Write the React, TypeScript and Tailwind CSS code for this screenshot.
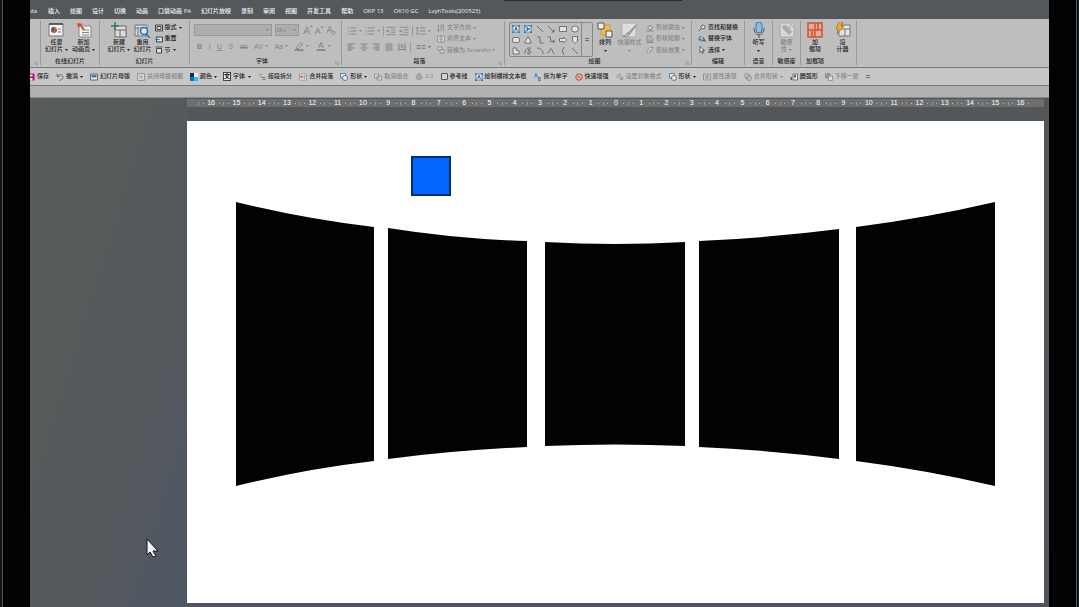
import React from "react";
import clsx from "clsx";

const menus = [
  "插入",
  "绘图",
  "设计",
  "切换",
  "动画",
  "口袋动画 PA",
  "幻灯片放映",
  "录制",
  "审阅",
  "视图",
  "开发工具",
  "帮助",
  "OKP 13",
  "OK10 GC",
  "LvyhTools(200523)",
];

const icons: Record<string, React.ReactNode> = {
  slidePie: (
    <>
      <path d="M1 2h14v12H1z" fill="#f2f2f2" stroke="#777" />
      <path d="M1 2h14" stroke="#444" strokeWidth="1.5" />
      <circle cx="6" cy="8" r="3" fill="#d2502d" />
      <path d="M6 8V5a3 3 0 0 0-2 5z" fill="#2c62a0" />
      <path d="M10 7h3M10 10h3" stroke="#777" />
    </>
  ),
  slideStar: (
    <>
      <path d="M3 4h12v11H3z" fill="#f4f4f4" stroke="#888" />
      <path d="M6 8h7M6 10.5h7M6 13h7" stroke="#888" />
      <path d="M1 1l6 1-2 1 4 4-2 1-3-4-2 2z" fill="#e2462c" />
    </>
  ),
  newSlide: (
    <>
      <path d="M4 4h11v11H4zM4 8h11M9 8v7" fill="#ddd" stroke="#666" />
      <path d="M4 0v8M0 4h8" stroke="#2f7d4f" strokeWidth="1.5" />
    </>
  ),
  reuse: (
    <>
      <path d="M1 3h12v11H1zM1 6h12M4 6v8" fill="#d8d8d8" stroke="#777" />
      <circle cx="10" cy="9" r="3.5" fill="#dce9f3" stroke="#2274b5" strokeWidth="1.5" />
      <path d="M12 12l4 4" stroke="#2274b5" strokeWidth="1.5" />
    </>
  ),
  layout: <path d="M1 2h14v12H1zM4 5h8v6H4z" fill="#ddd" stroke="#444" strokeWidth="2" />,
  reset: (
    <>
      <path d="M3 4h12v10H3z" fill="#ddd" stroke="#444" strokeWidth="2" />
      <path d="M9 9H2M5 5L1 9l4 4" fill="none" stroke="#2274b5" strokeWidth="2" />
    </>
  ),
  section: (
    <>
      <path d="M3 5h10v9H3z" fill="#ddd" stroke="#444" strokeWidth="2" />
      <path d="M1 2h14" stroke="#2f7d4f" strokeWidth="2" />
    </>
  ),
  growFont: <path d="M1 15L6 3l5 12M3 11h6M11 4l2-3 2 3" fill="none" stroke="currentColor" strokeWidth="1.5" />,
  shrinkFont: <path d="M2 14L6 5l4 9M4 11h5M11 2l2 3 2-3" fill="none" stroke="currentColor" strokeWidth="1.5" />,
  clearFont: <path d="M1 13L6 2l4 9M3 9h5M9 12l3-3 3 3-3 3z" fill="none" stroke="currentColor" strokeWidth="1.5" />,
  marker: (
    <>
      <path d="M4 10l7-8 3 3-7 7H4z" fill="none" stroke="currentColor" strokeWidth="1.5" />
      <path d="M1 13h14v3H1z" fill="currentColor" />
    </>
  ),
  fontColor: (
    <>
      <path d="M4 11L8 2l4 9M5 8h6" fill="none" stroke="currentColor" strokeWidth="1.5" />
      <path d="M1 13h14v3H1z" fill="currentColor" />
    </>
  ),
  list: <path d="M1 3h2M5 3h10M1 8h2M5 8h10M1 13h2M5 13h10" stroke="currentColor" strokeWidth="1.5" />,
  indent: <path d="M1 2h14M8 6h7M8 10h7M1 14h14M6 8H1M3 6L1 8l2 2" fill="none" stroke="currentColor" strokeWidth="1.5" />,
  spacing: <path d="M6 3h9M6 8h9M6 13h9M2 2v12M0 4l2-2 2 2M0 12l2 2 2-2" fill="none" stroke="currentColor" strokeWidth="1.5" />,
  alignLeft: <path d="M1 2h14M1 6h9M1 10h14M1 14h9" stroke="currentColor" strokeWidth="1.5" />,
  alignCenter: <path d="M1 2h14M4 6h8M1 10h14M4 14h8" stroke="currentColor" strokeWidth="1.5" />,
  alignRight: <path d="M1 2h14M6 6h9M1 10h14M6 14h9" stroke="currentColor" strokeWidth="1.5" />,
  justify: <path d="M1 2h14M1 6h14M1 10h14M1 14h14" stroke="currentColor" strokeWidth="1.5" />,
  distribute: <path d="M2 1v14M14 1v14M5 4h6M5 8h6M2 13h12" stroke="currentColor" strokeWidth="1.5" />,
  columns: <path d="M1 6h6M9 6h6M1 10h6M9 10h6" stroke="currentColor" strokeWidth="1.5" />,
  textDir: <path d="M3 1v14M1 12l2 3 2-3M8 15V2h5M13 2v13M8 8h5" fill="none" stroke="currentColor" strokeWidth="1.5" />,
  alignText: <path d="M1 2h14v12H1zM8 0v16M4 8h8" fill="#d2d2d2" stroke="currentColor" strokeWidth="1.5" />,
  smartArt: <path d="M1 2h9v6H1zM6 7h8v7H6z" fill="#d2d2d2" stroke="currentColor" strokeWidth="1.5" />,
  textBoxBlue: (
    <>
      <path d="M2 2h12v12H2z" fill="#e8f1f8" stroke="#2171b4" strokeWidth="1.5" />
      <path d="M5 12l3-8 3 8M6 9h4" fill="none" stroke="#1d4f80" strokeWidth="1.5" />
      <path d="M0 0h3v3H0zM13 0h3v3h-3zM0 13h3v3H0zM13 13h3v3h-3z" fill="#2171b4" />
    </>
  ),
  textBoxBlueV: (
    <>
      <path d="M2 2h12v12H2z" fill="#e8f1f8" stroke="#2171b4" strokeWidth="1.5" />
      <path d="M4 5l8 3-8 3M7 5v6" fill="none" stroke="#1d4f80" strokeWidth="1.5" />
      <path d="M0 0h3v3H0zM13 0h3v3h-3zM0 13h3v3H0zM13 13h3v3h-3z" fill="#2171b4" />
    </>
  ),
  line: <path d="M2 2l12 12" stroke="#555" strokeWidth="1.5" />,
  arrow: <path d="M2 2l12 12M14 9v5H9" fill="none" stroke="#555" strokeWidth="1.5" />,
  rect: <path d="M1 3h14v10H1z" fill="#e2e2e2" stroke="#555" strokeWidth="1.5" />,
  oval: <ellipse cx="8" cy="8" rx="7" ry="6" fill="#e2e2e2" stroke="#555" strokeWidth="1.5" />,
  roundRect: <rect x="1" y="3" width="14" height="10" rx="3" fill="#e2e2e2" stroke="#555" strokeWidth="1.5" />,
  triangle: <path d="M8 1l7 13H1z" fill="#e2e2e2" stroke="#555" strokeWidth="1.5" />,
  elbow: <path d="M2 2h6v12h7" fill="none" stroke="#555" strokeWidth="1.5" />,
  elbowArrow: <path d="M1 2h6v9h8M12 8l3 3-3 3" fill="none" stroke="#555" strokeWidth="1.5" />,
  blockArrow: <path d="M1 5h8V2l6 6-6 6v-3H1z" fill="#e2e2e2" stroke="#555" strokeWidth="1.5" />,
  pentagon: <path d="M3 1h10v9l-5 5-5-5z" fill="#e2e2e2" stroke="#555" strokeWidth="1.5" />,
  freeform: <path d="M2 2h7l-1 4 6 2v6H2z" fill="#e2e2e2" stroke="#555" strokeWidth="1.5" />,
  scribble: <path d="M2 13C2 3 8 1 13 2L8 7c7-3 6 8 1 7-4-1-1-5 2-3" fill="none" stroke="#555" strokeWidth="1.5" />,
  arc: <path d="M2 2c8 0 12 5 12 12" fill="none" stroke="#555" strokeWidth="1.5" />,
  curve: <path d="M1 12c5-1 4-9 7-9s2 10 7 10" fill="none" stroke="#555" strokeWidth="1.5" />,
  brace: <path d="M11 1c-5 0-2 7-5 7 3 0 0 7 5 7" fill="none" stroke="#555" strokeWidth="1.5" />,
  arrange: (
    <>
      <path d="M4 3h9v10H4z" fill="#f3bd4b" stroke="#d69a2b" />
      <path d="M1 1h6v6H1zM9 9h6v6H9z" fill="#eee" stroke="#555" />
    </>
  ),
  quickStyle: (
    <>
      <path d="M1 1h14v14H1z" fill="#dedede" stroke="#aaa" />
      <path d="M15 3l-8 8 2 1zM7 11c-3 0-2 3-5 3 3 1 6 1 6-2" fill="#bbb" stroke="#888" />
    </>
  ),
  fill: <path d="M3 8l5-6 5 6-5 4zM1 14h14" fill="#d5d5d5" stroke="currentColor" strokeWidth="2" />,
  outline: <path d="M13 7v5H2V2h7M6 9l7-8M1 15h14" fill="none" stroke="currentColor" strokeWidth="2" />,
  effect: <path d="M2 9l6-6h6l-3 6-4 5H4zM5 9h6" fill="#d5d5d5" stroke="currentColor" strokeWidth="1.5" />,
  search: <path d="M14 6a4 4 0 1 1-8 0 4 4 0 0 1 8 0zM7 9l-6 6" fill="#ddd" stroke="#444" strokeWidth="1.5" />,
  replaceFont: (
    <>
      <path d="M8 14l3-9 4 9M9 11h5" fill="none" stroke="#444" strokeWidth="1.5" />
      <path d="M7 3C2 3 1 7 4 10M1 9l4 2V7" fill="none" stroke="#2171b4" strokeWidth="2" />
    </>
  ),
  pointer: <path d="M4 1v12l3-3 2 5 2-1-2-5h4z" fill="#eee" stroke="#444" strokeWidth="1.5" />,
  mic: (
    <>
      <rect x="5" y="0" width="6" height="11" rx="3" fill="#8dbde2" stroke="#2a76b5" />
      <path d="M3 6c0 9 10 9 10 0M8 13v3" fill="none" stroke="#555" />
    </>
  ),
  sensitivity: (
    <>
      <path d="M1 1h14v14H1z" fill="#d8d8d8" stroke="#aaa" />
      <path d="M3 4l4-1 6 7-3 3-6-6z" fill="#aaa" />
      <path d="M11 2l3 3M9 4l3 3" stroke="#999" />
    </>
  ),
  addins: (
    <>
      <path d="M1 1h14v14H1z" fill="#dcaea0" stroke="#d4512e" strokeWidth="1.5" />
      <path d="M8 1v14M1 8h14M5 8v7M11 1v7" stroke="#d4512e" strokeWidth="1.5" />
    </>
  ),
  designer: (
    <>
      <path d="M4 3h11v11H4zM4 7h11M10 7v7" fill="#e2e2e2" stroke="#777" />
      <path d="M4 0h4L6 4h3l-7 8 1-5H1z" fill="#f2a92d" stroke="#9c6410" strokeWidth=".7" />
    </>
  ),
  save: (
    <>
      <path d="M0 1h15v14H0z" fill="#b5127b" />
      <path d="M2 3h9v4H2zM3 10h8v5H3z" fill="#f0dce8" />
    </>
  ),
  undo: <path d="M2 1v6h6M2 7c5-6 12-4 12 1 0 4-3 6-7 7" fill="none" stroke="#555" strokeWidth="1.5" />,
  master: (
    <>
      <path d="M1 2h14v12H1z" fill="#eee" stroke="#444" strokeWidth="1.5" />
      <path d="M3 4h10v5H3z" fill="#2b7cc0" />
    </>
  ),
  closeMaster: <path d="M1 1h14v14H1zM5 5l6 6M11 5l-6 6" fill="#d5d5d5" stroke="currentColor" strokeWidth="1.5" />,
  colors: (
    <>
      <path d="M0 0h8v8H0z" fill="#222b3b" />
      <path d="M8 0h8v8H8z" fill="#e6eff5" />
      <path d="M0 8h8v8H0z" fill="#0d65d8" />
      <path d="M8 8h8v8H8z" fill="#25c3f3" />
    </>
  ),
  split: (
    <>
      <path d="M1 3h9M1 6h6" stroke="#dda137" strokeWidth="2" />
      <path d="M6 9h9M9 13h6" stroke="#4384b7" strokeWidth="2" />
    </>
  ),
  merge: (
    <>
      <path d="M1 2h14v12H1z" fill="#eee" stroke="#666" />
      <path d="M3 5h4v5H3z" fill="#d2502d" />
      <path d="M9 6h4M9 10h4" stroke="#2171b4" strokeWidth="2" />
    </>
  ),
  shapes: (
    <>
      <path d="M1 1h10v9H1z" fill="#dce7ef" stroke="#2171b4" strokeWidth="1.5" />
      <circle cx="10" cy="10" r="5" fill="#eee" stroke="#555" strokeWidth="1.5" />
    </>
  ),
  group: <path d="M1 2h9v8H1zM6 6h9v8H6z" fill="#d6d6d6" stroke="currentColor" strokeWidth="1.5" />,
  ratio: <path d="M8 2a6 6 0 1 0 .1 0zM5 1h6M5 8h6" fill="#aaa" stroke="currentColor" />,
  splitChar: <path d="M1 9l3-8 3 8M2 6h4M9 15V9h4v3H9m0 3h5" fill="none" stroke="#2774ae" strokeWidth="1.5" />,
  quickBoost: (
    <>
      <circle cx="8" cy="8" r="6.5" fill="#e6c0b5" stroke="#bf4a33" strokeWidth="2" />
      <path d="M4 5l8 6M5 10l5-5" stroke="#bf4a33" strokeWidth="1.5" />
    </>
  ),
  format: <path d="M1 7l6-6 3 3-6 6zM8 10h7M8 13h4M9 7l5 4-5 4" fill="none" stroke="currentColor" strokeWidth="1.5" />,
  props: <path d="M6 2H1v12h5M10 2h5v12h-5M8 1v14M4 8h8" fill="none" stroke="currentColor" strokeWidth="1.5" />,
  union: <path d="M11 6a5 5 0 1 1-10 0 5 5 0 0 1 10 0zM15 10a5 5 0 1 1-10 0 5 5 0 0 1 10 0z" fill="none" stroke="currentColor" strokeWidth="1.5" />,
  arcShape: (
    <>
      <path d="M6 2h9v12H6z" fill="#eee" stroke="#555" strokeWidth="1.5" />
      <path d="M1 8h3v6H1z" fill="#c23a2a" />
      <path d="M8 4h4v5H8z" fill="#2171b4" />
    </>
  ),
  sendBack: (
    <>
      <path d="M1 1h9v9H1z" fill="#999" stroke="currentColor" strokeWidth="1.5" />
      <path d="M7 6h8v9H7z" fill="#ddd" stroke="currentColor" strokeWidth="1.5" />
    </>
  ),
};

const sizes = {
  sm: "size-2",
  md: "size-[10px]",
  lg: "size-4",
};

const Icon = ({ name, size = "sm" }: { name: string; size?: keyof typeof sizes }) => (
  <svg viewBox="0 0 16 16" className={clsx("shrink-0", sizes[size])} aria-hidden="true">
    {icons[name]}
  </svg>
);

const Caret = () => (
  <svg viewBox="0 0 6 4" className="h-[2px] w-[3px] shrink-0" aria-hidden="true">
    <path d="M0 0h6L3 4z" fill="currentColor" />
  </svg>
);

type ToolProps = { icon: string; label: string; caret?: boolean; muted?: boolean };

const Tool = ({ icon, label, caret, muted }: ToolProps) => (
  <button className={clsx("flex shrink-0 items-center gap-[2px]", muted && "text-[#858585]")}>
    <Icon name={icon} />
    {label}
    {caret && <Caret />}
  </button>
);

const BigTool = ({
  icon,
  lines,
  caret,
  muted,
}: {
  icon: string;
  lines: string[];
  caret?: boolean;
  muted?: boolean;
}) => (
  <button className={clsx("flex shrink-0 flex-col items-center", muted && "text-[#858585]")}>
    <Icon name={icon} size="lg" />
    <span className="mt-px">{lines[0]}</span>
    <span className="flex h-[7px] items-center gap-[2px]">
      {lines[1]}
      {caret && <Caret />}
    </span>
  </button>
);

const IconTool = ({ icon, label, caret }: { icon: string; label: string; caret?: boolean }) => (
  <button aria-label={label} className="flex items-center gap-[2px]">
    <Icon name={icon} size="md" />
    {caret && <Caret />}
  </button>
);

const Group = ({
  label,
  width,
  launcher,
  last,
  children,
}: {
  label?: string;
  width: string;
  launcher?: boolean;
  last?: boolean;
  children?: React.ReactNode;
}) => (
  <section className={clsx("relative my-[2px] flex shrink-0 flex-col", width, !last && "border-r border-[#999]")}>
    <div className="flex h-9 items-start justify-center pt-px">{children}</div>
    <h2 className={clsx("mt-px text-center", launcher && "pr-[7px]")}>{label}</h2>
    {launcher && (
      <button aria-label="更多选项" className="absolute right-[2px] bottom-0 text-[#777]">
        <svg viewBox="0 0 8 8" className="size-1">
          <path d="M0 7V0h7M3 3l4 4M7 4v3H4" fill="none" stroke="currentColor" />
        </svg>
      </button>
    )}
  </section>
);

const Stack = ({ items }: { items: ToolProps[] }) => (
  <div className="flex h-[34px] flex-col justify-around">
    {items.map((item) => (
      <Tool key={item.label} {...item} />
    ))}
  </div>
);

const gallery = [
  "textBoxBlue",
  "textBoxBlueV",
  "line",
  "arrow",
  "rect",
  "oval",
  "roundRect",
  "triangle",
  "elbow",
  "elbowArrow",
  "blockArrow",
  "pentagon",
  "freeform",
  "scribble",
  "arc",
  "curve",
  "brace",
  "line",
];

const FontGroup = () => (
  <div className="flex w-full flex-col gap-[5px] px-1 pt-[2px] text-[#858585]">
    <div className="flex items-center gap-[3px]">
      <label className="relative flex items-center">
        <select aria-label="字体名称" className="h-3 w-[78px] appearance-none border border-[#999] bg-[#adadad]">
          <option></option>
        </select>
        <span className="pointer-events-none absolute right-[3px]">
          <Caret />
        </span>
      </label>
      <label className="relative flex items-center">
        <select aria-label="字号" className="h-3 w-6 appearance-none border border-[#999] bg-[#adadad] text-[6px]">
          <option>18+</option>
        </select>
        <span className="pointer-events-none absolute right-[3px]">
          <Caret />
        </span>
      </label>
      <div className="flex grow justify-around">
        <IconTool icon="growFont" label="增大字号" />
        <IconTool icon="shrinkFont" label="减小字号" />
        <IconTool icon="clearFont" label="清除格式" />
      </div>
    </div>
    <div className="flex items-center justify-between pr-[6px] pl-[3px] text-[7px]">
      <button className="font-bold">B</button>
      <button className="italic">I</button>
      <button className="underline">U</button>
      <button>S</button>
      <button className="line-through">ab</button>
      <button className="flex items-center gap-[2px]">
        AV
        <Caret />
      </button>
      <button className="flex items-center gap-[2px]">
        Aa
        <Caret />
      </button>
      <IconTool icon="marker" label="突出显示" caret />
      <IconTool icon="fontColor" label="字体颜色" caret />
    </div>
  </div>
);

const ParagraphGroup = () => (
  <div className="flex w-full gap-[6px] pl-[5px] text-[#858585]">
    <div className="flex w-[84px] flex-col gap-[6px] pt-1">
      <div className="flex items-center justify-between">
        <IconTool icon="list" label="项目符号" caret />
        <IconTool icon="list" label="编号" caret />
        <span className="h-[10px] border-l border-[#999]" />
        <IconTool icon="indent" label="减少缩进" />
        <IconTool icon="indent" label="增加缩进" />
        <span className="h-[10px] border-l border-[#999]" />
        <IconTool icon="spacing" label="行距" caret />
      </div>
      <div className="flex items-center justify-between text-[#6c6c6c]">
        <Icon name="alignLeft" />
        <Icon name="alignCenter" />
        <Icon name="alignRight" />
        <Icon name="justify" />
        <Icon name="distribute" />
        <span className="h-[10px] border-l border-[#999]" />
        <IconTool icon="columns" label="分栏" caret />
      </div>
    </div>
    <Stack
      items={[
        { icon: "textDir", label: "文字方向", caret: true, muted: true },
        { icon: "alignText", label: "对齐文本", caret: true, muted: true },
        { icon: "smartArt", label: "转换为 SmartArt", caret: true, muted: true },
      ]}
    />
  </div>
);

const DrawingGroup = () => (
  <div className="flex w-full items-start gap-1 pl-1">
    <div className="flex h-[35px] w-[84px] shrink-0 rounded-xs border border-[#888]">
      <div className="grid grow grid-cols-6 place-items-center">
        {gallery.map((name, i) => (
          <Icon key={i} name={name} />
        ))}
      </div>
      <button aria-label="更多形状" className="w-[11px] border-l border-[#888] text-[8px]">
        =
      </button>
    </div>
    <div className="flex grow justify-between pr-[6px]">
      <button className="flex w-4 flex-col items-center">
        <Icon name="arrange" size="lg" />
        <span className="mt-px mb-1">排列</span>
        <Caret />
      </button>
      <button className="flex flex-col items-center text-[#858585]">
        <Icon name="quickStyle" size="lg" />
        <span className="mt-px mb-1">快速样式</span>
        <Caret />
      </button>
      <Stack
        items={[
          { icon: "fill", label: "形状填充", caret: true, muted: true },
          { icon: "outline", label: "形状轮廓", caret: true, muted: true },
          { icon: "effect", label: "形状效果", caret: true, muted: true },
        ]}
      />
    </div>
  </div>
);

const Ribbon = () => (
  <div className="flex h-[49px] shrink-0 overflow-hidden border-b border-[#777b79] bg-[#bebebe]">
    <Group width="w-[11px]" launcher />
    <Group width="w-[59px]" label="在线幻灯片">
      <div className="flex gap-1">
        <BigTool icon="slidePie" lines={["任意", "幻灯片"]} caret />
        <BigTool icon="slideStar" lines={["新加", "动画页"]} caret />
      </div>
    </Group>
    <Group width="w-[90px]" label="幻灯片">
      <div className="flex gap-[3px]">
        <BigTool icon="newSlide" lines={["新建", "幻灯片"]} caret />
        <BigTool icon="reuse" lines={["重用", "幻灯片"]} />
        <Stack
          items={[
            { icon: "layout", label: "版式", caret: true },
            { icon: "reset", label: "重置" },
            { icon: "section", label: "节", caret: true },
          ]}
        />
      </div>
    </Group>
    <Group width="w-[152px]" label="字体" launcher>
      <FontGroup />
    </Group>
    <Group width="w-[163px]" label="段落" launcher>
      <ParagraphGroup />
    </Group>
    <Group width="w-[187px]" label="绘图" launcher>
      <DrawingGroup />
    </Group>
    <Group width="w-[53px]" label="编辑">
      <Stack
        items={[
          { icon: "search", label: "查找和替换" },
          { icon: "replaceFont", label: "替换字体" },
          { icon: "pointer", label: "选择", caret: true },
        ]}
      />
    </Group>
    <Group width="w-7" label="语音">
      <button className="flex flex-col items-center">
        <Icon name="mic" size="lg" />
        <span className="mt-px mb-1">听写</span>
        <Caret />
      </button>
    </Group>
    <Group width="w-7" label="敏感度">
      <BigTool icon="sensitivity" lines={["敏感", "性"]} caret muted />
    </Group>
    <Group width="w-7" label="加载项" last>
      <BigTool icon="addins" lines={["加", "载项"]} />
    </Group>
    <Group width="w-7">
      <BigTool icon="designer" lines={["设", "计器"]} />
    </Group>
  </div>
);

const FontIcon = () => <span className="bg-[#eee] font-bold text-black outline outline-[#444]">文</span>;

const QuickBar = () => (
  <div className="flex h-[18px] shrink-0 items-center gap-[7px] overflow-hidden border-b border-[#777b79] bg-[#c7c7c7]">
    <button className="-ml-[3px] flex shrink-0 items-center gap-[2px]">
      <Icon name="save" />
      保存
    </button>
    <Tool icon="undo" label="撤消" caret />
    <Tool icon="master" label="幻灯片母版" />
    <Tool icon="closeMaster" label="关闭母版视图" muted />
    <Tool icon="colors" label="颜色" caret />
    <button className="flex shrink-0 items-center gap-[3px]">
      <FontIcon />
      字体
      <Caret />
    </button>
    <Tool icon="split" label="按段拆分" />
    <Tool icon="merge" label="合并段落" />
    <Tool icon="shapes" label="形状" caret />
    <Tool icon="group" label="取消组合" muted />
    <Tool icon="ratio" label="1:1" muted />
    <label className="flex shrink-0 items-center gap-[2px]">
      <input type="checkbox" className="size-[7px] appearance-none rounded-[1px] border border-[#555] bg-[#d5d5d5]" />
      参考线
    </label>
    <Tool icon="textBoxBlue" label="绘制横排文本框" />
    <Tool icon="splitChar" label="拆为单字" />
    <Tool icon="quickBoost" label="快速增强" />
    <Tool icon="format" label="设置对象格式" muted />
    <Tool icon="shapes" label="形状" caret />
    <Tool icon="props" label="属性选项" muted />
    <Tool icon="union" label="合并形状" caret muted />
    <Tool icon="arcShape" label="圆弧形" />
    <Tool icon="sendBack" label="下移一层" muted />
    <button aria-label="自定义快速访问工具栏" className="text-[8px]">
      =
    </button>
  </div>
);

const marks = Array.from({ length: 33 }, (_, i) => Math.abs(i - 16));

const Ruler = () => (
  <div className="mt-px flex h-2 overflow-hidden bg-[#6c6e6f] px-[11px] text-[7px] leading-[8px] text-white">
    {marks.map((mark, i) => (
      <div key={i} className="flex flex-1 items-center justify-between">
        <span className="h-[3px] border-l border-[#999]" />
        <span className="size-px bg-[#bbb]" />
        <span className="w-2 text-center">{mark}</span>
        <span className="size-px bg-[#bbb]" />
        <span />
      </div>
    ))}
  </div>
);

const Slide = () => (
  <svg viewBox="0 0 857 482" className="mt-[14px] h-auto w-full bg-white">
    <rect x="225" y="36" width="38" height="38" fill="#0066ff" stroke="#072c72" strokeWidth="2" />
    <g fill="#020204">
      <path d="M49 81Q118 98 187 106V340Q118 348 49 365Z" />
      <path d="M201 107Q270 118 340 120V326Q270 329 201 338Z" />
      <path d="M358 121Q428 125 498 121V325Q428 322 358 325Z" />
      <path d="M512 120Q582 117 652 108V338Q582 329 512 326Z" />
      <path d="M669 106Q739 97 808 81V365Q739 349 669 340Z" />
    </g>
  </svg>
);

export default function App() {
  return (
    <div className="flex min-h-screen bg-[#020203] font-['Liberation_Sans','Noto_Sans_CJK_SC',sans-serif] text-[6px] leading-[7px] font-medium text-[#222]">
      <div className="w-[30px] shrink-0">
        <div className="h-full w-[3px] border-r border-[#555] bg-[#0d1717]" />
      </div>
      <div className="flex min-w-0 grow flex-col">
        <nav className="relative flex h-[19px] shrink-0 items-center gap-[10px] overflow-hidden bg-[#54585b] pt-1 font-['Open_Sans','Noto_Sans_CJK_SC',sans-serif] whitespace-nowrap text-[#f2f2f2]">
          <a href="#" className="w-2">
            da
          </a>
          {menus.map((menu) => (
            <a key={menu} href="#">
              {menu}
            </a>
          ))}
          <span className="absolute top-0 left-[474px] h-px w-[178px] bg-[#20302f]" />
        </nav>
        <Ribbon />
        <QuickBar />
        <div className="h-3 shrink-0 border-b border-[#8b8b8b] bg-[#b1b1b1]" />
        <main className="flex grow bg-linear-to-b from-[#53575a] to-[#50555d]">
          <aside className="relative w-[157px] shrink-0 bg-linear-to-br from-[#575a5b] from-30% via-[#56595b] via-60% to-[#4e5665]">
            <svg viewBox="0 0 12 19" className="absolute top-[440px] left-[116px] h-[19px] w-3" aria-hidden="true">
              <path d="M1 1v16l3-3 3 5 3-1-3-5h5z" fill="#f2f2f6" stroke="#151515" />
            </svg>
          </aside>
          <div className="min-w-0 grow pr-[5px]">
            <Ruler />
            <Slide />
          </div>
        </main>
      </div>
      <div className="flex w-[30px] shrink-0 justify-end">
        <div className="h-full w-[3px] border-l border-[#555] bg-[#0d1717]" />
      </div>
    </div>
  );
}
